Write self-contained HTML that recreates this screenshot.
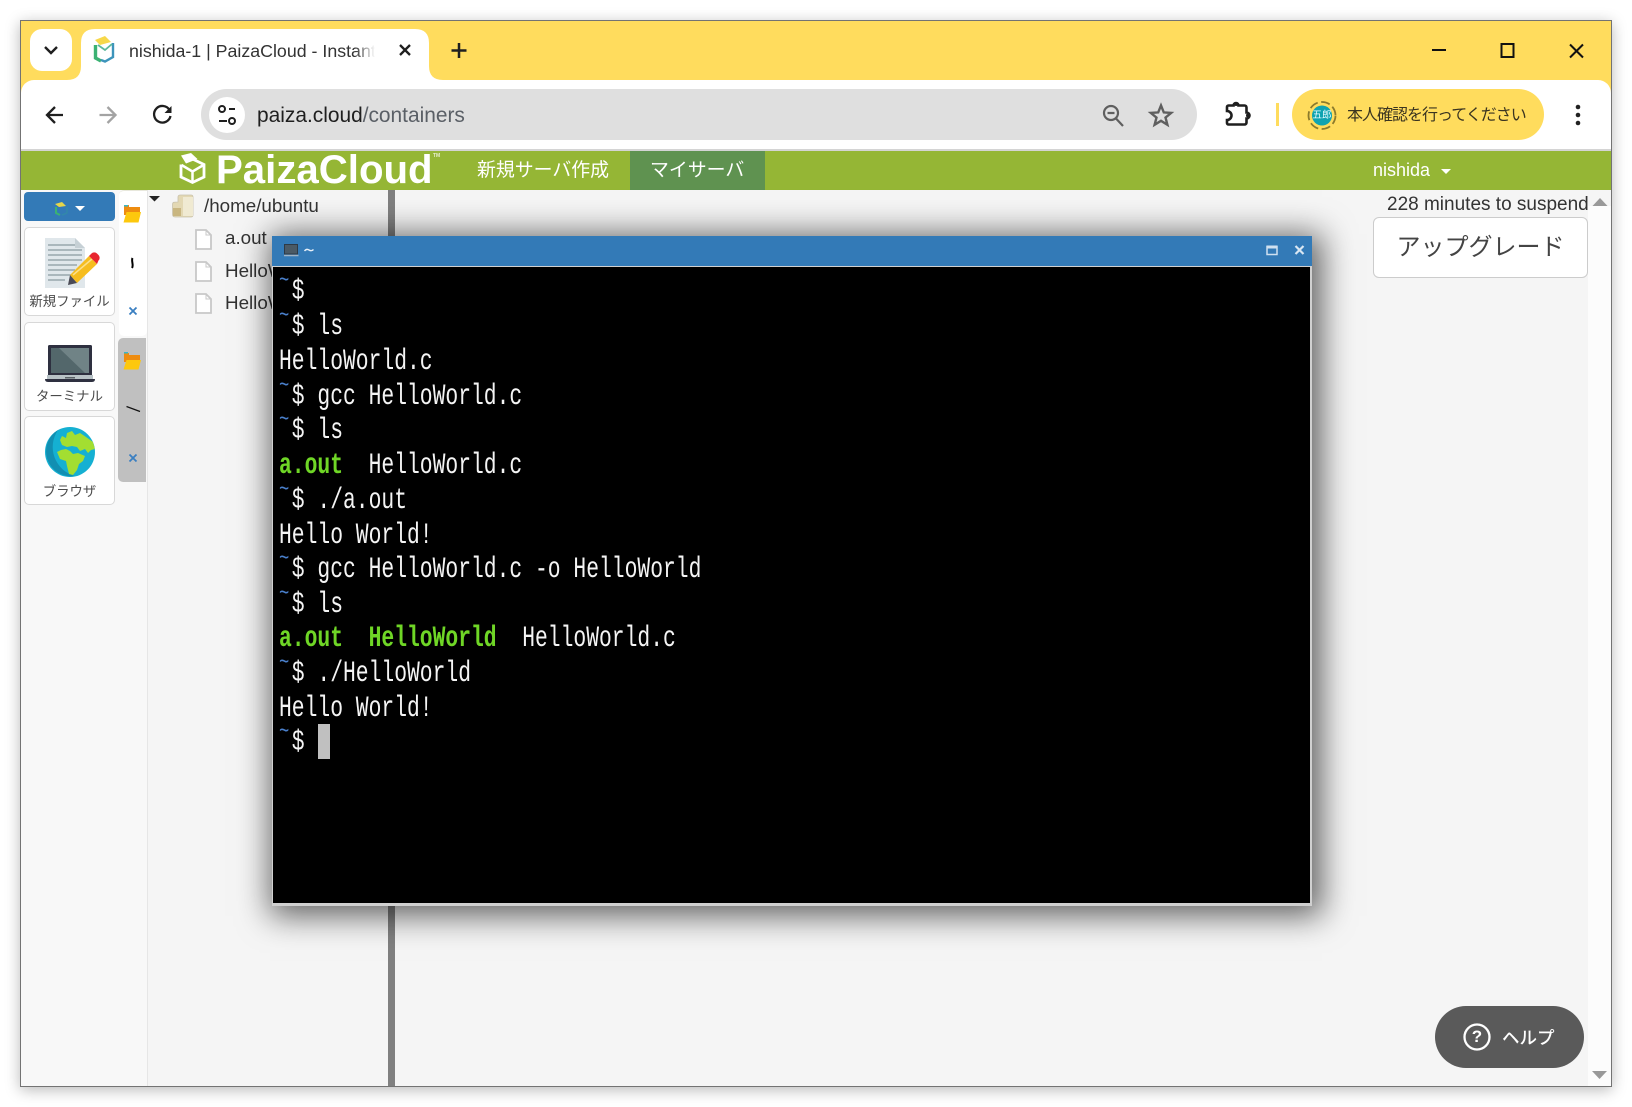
<!DOCTYPE html>
<html lang="ja">
<head>
<meta charset="utf-8">
<title>PaizaCloud</title>
<style>
html,body{margin:0;padding:0;background:#fff;width:1632px;height:1107px;overflow:hidden}
body{font-family:"Liberation Sans","Noto Sans CJK JP",sans-serif;color:#333;position:relative}
.a{position:absolute;white-space:nowrap}
svg{position:absolute;overflow:visible}
#win{left:20px;top:20px;width:1590px;height:1065px;border:1px solid #737373;background:#f5f5f5;box-shadow:0 3px 14px rgba(0,0,0,.28)}
.card{position:absolute;left:24px;width:89px;background:#fff;border:1px solid #d8d8d8;border-radius:5px}
.lbl{position:absolute;width:91px;left:24px;text-align:center;font-size:13.4px;line-height:18px;color:#4a4a4a;white-space:nowrap}
.file{position:absolute;left:225px;font-size:18.8px;line-height:24px;color:#333;white-space:nowrap}
.ln{position:absolute;left:279px;height:35px;line-height:35px;font-family:"Liberation Mono",monospace;font-size:30px;color:#f4f4f4;white-space:pre;transform:scaleX(.711);transform-origin:0 50%}
.ln i{font-style:normal;color:#4a80cc;position:relative;top:-12px;font-size:24px;letter-spacing:3.6px}
.ln b{color:#6fd626;font-weight:bold}
</style>
</head>
<body>
<div class="a" id="win"></div>

<!-- tab strip -->
<div class="a" style="left:21px;top:21px;width:1590px;height:75px;background:#ffdc5d"></div>
<div class="a" style="left:21px;top:80px;width:1590px;height:69px;background:#fff;border-radius:13px 13px 0 0"></div>
<div class="a" style="left:21px;top:149px;width:1590px;height:2px;background:#d4d4d4"></div>
<div class="a" style="left:30px;top:29px;width:42px;height:42px;background:#fff;border-radius:12px"></div>
<svg style="left:0;top:0" width="1632" height="160" fill="none">
  <path d="M45 47l6 6 6-6" stroke="#1f1f1f" stroke-width="2.4"/>
  <path d="M67 80Q81 80 81 66V43Q81 29 95 29H415Q429 29 429 43V66Q429 80 443 80Z" fill="#fff"/>
  <!-- favicon -->
  <path d="M95 40L105 36L111 42L100 45Z" fill="#f7d84a"/>
  <path d="M95.500 45V58L101 61" stroke="#3bb273" stroke-width="3.400"/>
  <path d="M113 43V57L105 61.500L101 60" stroke="#3d94bb" stroke-width="2.400"/>
  <path d="M98 45L105 50L112 44" stroke="#5cb89a" stroke-width="1.800"/>
  <!-- tab close, plus -->
  <path d="M400 45l10 10M410 45l-10 10" stroke="#1f1f1f" stroke-width="2.300"/>
  <path d="M459 43v15M451.500 50.500h15" stroke="#1f1f1f" stroke-width="2.500"/>
  <!-- window controls -->
  <path d="M1432 50h14" stroke="#111" stroke-width="2"/>
  <rect x="1501.500" y="44" width="12" height="13" stroke="#111" stroke-width="2"/>
  <path d="M1570 44.500l13 13M1583 44.500l-13 13" stroke="#111" stroke-width="2"/>
  <!-- nav -->
  <path d="M63 115H47M55 107l-8 8 8 8" stroke="#1f1f1f" stroke-width="2.300"/>
  <path d="M99.500 115h16M107.500 107l8 8-8 8" stroke="#a3a3a3" stroke-width="2.300"/>
  <path d="M169.500 110a8.300 8.300 0 1 0 1 6" stroke="#1f1f1f" stroke-width="2.300"/>
  <path d="M171.500 106v7h-7z" fill="#1f1f1f"/>
</svg>

<!-- omnibox -->
<div class="a" style="left:201px;top:89px;width:996px;height:51px;background:#dfdfdf;border-radius:26px"></div>
<div class="a" style="left:209px;top:97px;width:36px;height:36px;background:#fff;border-radius:50%"></div>
<svg style="left:0;top:0" width="1632" height="160" fill="none">
  <circle cx="222" cy="109" r="3" stroke="#1f1f1f" stroke-width="2"/>
  <path d="M229 109h6M219 121h8" stroke="#1f1f1f" stroke-width="2"/>
  <circle cx="232" cy="121" r="3" stroke="#1f1f1f" stroke-width="2"/>
  <circle cx="1111" cy="113" r="7" stroke="#5f5f5f" stroke-width="2.200"/>
  <path d="M1107.500 113h7M1116 118.500l7 7.500" stroke="#5f5f5f" stroke-width="2.200"/>
  <path d="M1161 105.500l2.800 6.900 7.400.5-5.700 4.700 1.900 7.200-6.400-4-6.400 4 1.900-7.200-5.700-4.700 7.400-.5z" stroke="#5f5f5f" stroke-width="2.400"/>
  <path d="M1228.500 105.500H1233.500a2.500 2.500 0 0 1 5 0H1244.500a2 2 0 0 1 2 2V112.500a3 3 0 0 1 0 6V122.500a2 2 0 0 1-2 2H1228.500a1.500 1.500 0 0 1-1.500-1.500V120a4.500 4.500 0 0 0 0-9V107a1.500 1.500 0 0 1 1.500-1.500Z" stroke="#1f1f1f" stroke-width="2.600"/>
  <circle cx="1236" cy="104" r="2" fill="#1f1f1f"/><circle cx="1248" cy="115.500" r="2" fill="#1f1f1f"/>
  <path d="M1277.500 103v23" stroke="#ffdc5d" stroke-width="3"/>
  <circle cx="1578" cy="107" r="2.300" fill="#222"/><circle cx="1578" cy="115" r="2.300" fill="#222"/><circle cx="1578" cy="123" r="2.300" fill="#222"/>
</svg>
<div class="a" style="left:1292px;top:89px;width:252px;height:51px;background:#ffdc5d;border-radius:26px"></div>
<svg style="left:0;top:0" width="1632" height="160" fill="none">
  <circle cx="1322" cy="115.500" r="13.500" stroke="#8b7a2c" stroke-width="1.800" stroke-dasharray="9 3.500"/>
  <circle cx="1322" cy="115.500" r="10" fill="#0fa3b1"/>
</svg>
<div class="a" style="left:1312px;top:108px;width:20px;text-align:center;font-size:9.500px;line-height:15px;color:#e8fbff">五郎</div>
<div class="a" style="left:1347px;top:104px;font-size:16px;line-height:24px;letter-spacing:-1px;color:#3a3420">本人確認を行ってください</div>

<div class="a" style="left:129px;top:38px;width:246px;overflow:hidden;font-size:17.800px;line-height:26px;color:#333">nishida-1 | PaizaCloud - Instant Development</div>
<div class="a" style="left:355px;top:38px;width:20px;height:26px;background:linear-gradient(90deg,rgba(255,255,255,0),#fff)"></div>
<div class="a" style="left:257px;top:102px;font-size:20.900px;line-height:28px;color:#1f1f1f">paiza.cloud<span style="color:#5a5f66">/containers</span></div>

<!-- green nav -->
<div class="a" style="left:21px;top:151px;width:1590px;height:39px;background:#95b635"></div>
<div class="a" style="left:630px;top:151px;width:135px;height:39px;background:#5f9250"></div>
<svg style="left:0;top:0" width="1632" height="200" fill="none">
  <path d="M192.500 159L204 164.500V177L192.500 182.500L181 177V164.500" stroke="#fff" stroke-width="2.800"/>
  <path d="M181 155.500L191 153L197.500 159L186 163.500Z" fill="#fff"/>
  <path d="M181.500 165L192.500 171.500L203.500 165M192.500 171.500V182" stroke="#fff" stroke-width="2.500"/>
</svg>
<div class="a" style="left:216px;top:147.500px;font-size:40.200px;line-height:44px;font-weight:bold;color:#fff;letter-spacing:0">PaizaCloud</div>
<div class="a" style="left:433px;top:152px;font-size:5px;line-height:8px;color:#e8eed0;font-weight:bold">TM</div>
<div class="a" style="left:477px;top:158px;font-size:18.900px;line-height:26px;color:#fff">新規サーバ作成</div>
<div class="a" style="left:650px;top:158px;font-size:18.900px;line-height:26px;color:#fff">マイサーバ</div>
<div class="a" style="left:1373px;top:157px;font-size:18px;line-height:26px;color:#fff">nishida</div>
<svg style="left:0;top:0" width="1632" height="200"><path d="M1441 169h10l-5 5z" fill="#fff"/></svg>

<!-- left column -->
<div class="a" style="left:21px;top:190px;width:126px;height:896px;background:#f8f8f8"></div>
<div class="a" style="left:147px;top:190px;width:1px;height:896px;background:#e6e6e6"></div>
<div class="a" style="left:24px;top:192px;width:91px;height:29px;background:#337ab7;border-radius:4px"></div>
<svg style="left:0;top:0" width="200" height="240" fill="none">
  <path d="M55 204L62 202L66 206L59 207Z" fill="#e6d64a"/>
  <path d="M56 207V213L60 215" stroke="#3bb273" stroke-width="2"/>
  <path d="M67 207V213L62 215" stroke="#3388aa" stroke-width="1.500"/>
  <path d="M75 206h10l-5 5z" fill="#fff"/>
</svg>
<div class="card" style="top:227px;height:87px"></div>
<div class="card" style="top:322px;height:87px"></div>
<div class="card" style="top:416px;height:87px"></div>
<div class="lbl" style="top:293px">新規ファイル</div>
<div class="lbl" style="top:388px">ターミナル</div>
<div class="lbl" style="top:483px">ブラウザ</div>

<svg style="left:0;top:0" width="140" height="520" fill="none">
  <defs><clipPath id="gl"><circle cx="70" cy="452" r="25"/></clipPath></defs>
  <!-- doc -->
  <path d="M45 238H75L85 248V288H45Z" fill="#e0e7eb"/>
  <path d="M75 238L85 248H75Z" fill="#c6d0d5"/>
  <path d="M48 245H75M48 250H82M48 255H82M48 260H82M48 265H77M48 270H75M48 275H72M48 280H65" stroke="#98a7ac" stroke-width="1.500"/>
  <path d="M70 275L89 256L97 264L77 283Z" fill="#f6bd1f"/>
  <path d="M73 275L92 259" stroke="#fbe08a" stroke-width="1.500"/>
  <path d="M89 256L91.500 253.500A3.800 3.800 0 0 1 97 253.500L98.500 255A3.800 3.800 0 0 1 98.500 260.500L97 264Z" fill="#e8262f"/>
  <path d="M70 275L77 283L68 285Z" fill="#4a4a55"/>
  <!-- laptop -->
  <rect x="48" y="345" width="44" height="31" rx="1.500" fill="#2e3040"/>
  <rect x="51" y="348" width="38" height="25" fill="#53676b"/>
  <path d="M59 348H89V373H85Z" fill="#708386"/>
  <path d="M47 375H93V380H47Z" fill="#b8c2c6"/>
  <path d="M45 379H95Q95 382 92 382H48Q45 382 45 379Z" fill="#2e3040"/>
  <rect x="65" y="377" width="10" height="1.500" fill="#5a6166"/>
  <!-- globe -->
  <circle cx="70" cy="452" r="25" fill="#15b0d2"/>
  <path d="M58 430A25 25 0 0 0 75 476A30 30 0 0 1 58 430Z" fill="#128fb2"/>
  <g clip-path="url(#gl)">
    <path d="M60 440L62 436L66 438L67 433L72 431L75 435L80 433L86 437L93 442L95 449L91 450L88 453L85 449L80 451L77 447L72 446L67 447L62 445Z" fill="#a3de31"/>
    <path d="M57 452L61 450L66 449L70 451L73 454L78 453L85 456L83 461L79 464L77 470L73 475L69 474L67 466L66 461L60 459Z" fill="#a3de31"/>
  </g>
</svg>

<!-- sidebar tabs -->
<div class="a" style="left:119px;top:190px;width:28px;height:146px;background:#fff;border-radius:5px 0 5px 5px;border-top:1px solid #e8e8dc;box-sizing:border-box"></div>
<div class="a" style="left:118px;top:338px;width:28px;height:144px;background:#c0c0c0;border-radius:5px 0 0 5px"></div>
<svg style="left:0;top:0" width="240" height="500" fill="none">
  <path d="M124 205H129V207H140V215H124Z" fill="#ee8c10"/>
  <path d="M124 205h4v1.500h-4z" fill="#36b6c9"/>
  <path d="M126.500 212H141L138.500 222.500H123.500Z" fill="#fdc80d"/>
  <path d="M124 353H129V355H140V362H124Z" fill="#ee8c10"/>
  <path d="M124 352h4v1.500h-4z" fill="#36b6c9"/>
  <path d="M126.500 360H141L138.500 369.500H123.500Z" fill="#fdc80d"/>
  <path d="M132.500 258C131 261 134 265 132 268" stroke="#000" stroke-width="2"/>
  <path d="M126.500 406.500L140 411.500" stroke="#111" stroke-width="1.300"/>
  <path d="M129.500 307.500l7 7M136.500 307.500l-7 7" stroke="#3a7fc1" stroke-width="1.800"/>
  <path d="M129.500 454.500l7 7M136.500 454.500l-7 7" stroke="#3a7fc1" stroke-width="1.800"/>
  <!-- tree -->
  <path d="M149 196h11l-5.500 5.500z" fill="#222"/>
  <path d="M172.500 214V204.500C172.500 202 174 202 178 202V197C178 195.500 179 195 180.500 195H191C192.500 195 193 196 193 197V215C193 216.500 192 217 191 217H175C173 217 172.500 216 172.500 214Z" fill="#e3d8b3" stroke="#c9c2ad" stroke-width=".8"/>
  <rect x="183" y="197" width="10" height="19" fill="#f0ead2"/>
  <path d="M173 208h8v8h-8z" fill="#c9b680"/>
  <path d="M196 230H206L211 235V249H196Z" fill="#fff" stroke="#c8c8c8" stroke-width="1.800"/>
  <path d="M206 230V235H211" stroke="#c8c8c8" stroke-width="1"/>
  <path d="M196 262H206L211 267V281H196Z" fill="#fff" stroke="#c8c8c8" stroke-width="1.800"/>
  <path d="M206 262V267H211" stroke="#c8c8c8" stroke-width="1"/>
  <path d="M196 294H206L211 299V313H196Z" fill="#fff" stroke="#c8c8c8" stroke-width="1.800"/>
  <path d="M206 294V299H211" stroke="#c8c8c8" stroke-width="1"/>
</svg>
<div class="file" style="left:204px;top:194px">/home/ubuntu</div>
<div class="file" style="top:226px">a.out</div>
<div class="file" style="top:259px">HelloWorld</div>
<div class="file" style="top:291px">HelloWorld.c</div>

<!-- splitter -->
<div class="a" style="left:388px;top:190px;width:7px;height:896px;background:#808080"></div>

<!-- right -->
<div class="a" style="left:1588px;top:206px;width:23px;height:880px;background:#fcfcfc"></div>
<div class="a" style="left:1387px;top:192px;font-size:19px;line-height:25px;color:#333">228 minutes to suspend</div>
<div class="a" style="left:1373px;top:217px;width:213px;height:59px;background:#fff;border:1px solid #ccc;border-radius:6px;text-align:center;font-size:24px;line-height:59px;color:#444">アップグレード</div>
<svg style="left:0;top:0" width="1632" height="1107">
  <path d="M1592.500 206h15l-7.500-8z" fill="#999"/>
  <path d="M1592 1071h15l-7.500 8z" fill="#999"/>
</svg>
<div class="a" style="left:1435px;top:1006px;width:149px;height:62px;background:#5a5a5a;border-radius:31px"></div>
<svg style="left:0;top:0" width="1632" height="1107" fill="none">
  <circle cx="1477" cy="1037" r="12.500" stroke="#fff" stroke-width="2.300"/>
</svg>
<div class="a" style="left:1467px;top:1024px;width:20px;text-align:center;font-size:17px;line-height:26px;font-weight:bold;color:#fff">?</div>
<div class="a" style="left:1502px;top:1025px;font-size:17.500px;line-height:26px;color:#fff;font-weight:500">ヘルプ</div>

<!-- terminal -->
<div class="a" style="left:272px;top:236px;width:1040px;height:670px;background:#d0d0d0;box-shadow:4px 4px 30px 6px rgba(0,0,0,.6)"></div>
<div class="a" style="left:272px;top:236px;width:1040px;height:30px;background:#337ab7"></div>
<div class="a" style="left:273px;top:267px;width:1037px;height:636px;background:#000"></div>
<svg style="left:0;top:0" width="1632" height="300" fill="none">
  <rect x="284.500" y="244.500" width="13" height="9.500" fill="#4a5a66" stroke="#2e3a46"/>
  <path d="M284 255.500h14.500" stroke="#9fb4c6" stroke-width="1.500"/>
  <path d="M304.500 251c1.500-2 3-2 4.500-1s3 1 4.500-.5" stroke="#e8f0f8" stroke-width="1.400"/>
  <rect x="1267" y="246.500" width="10" height="8" stroke="#cfe0f0" stroke-width="1.500"/>
  <path d="M1266.500 247h11" stroke="#cfe0f0" stroke-width="3"/>
  <path d="M1295.500 246l8 8M1303.500 246l-8 8" stroke="#d8e6f2" stroke-width="2.200"/>
</svg>
<div class="ln" style="top:274.500px"><i>~</i>$</div>
<div class="ln" style="top:310px"><i>~</i>$ ls</div>
<div class="ln" style="top:345px">HelloWorld.c</div>
<div class="ln" style="top:379.500px"><i>~</i>$ gcc HelloWorld.c</div>
<div class="ln" style="top:414px"><i>~</i>$ ls</div>
<div class="ln" style="top:449px"><b>a.out</b>  HelloWorld.c</div>
<div class="ln" style="top:484px"><i>~</i>$ ./a.out</div>
<div class="ln" style="top:518.500px">Hello World!</div>
<div class="ln" style="top:552.700px"><i>~</i>$ gcc HelloWorld.c -o HelloWorld</div>
<div class="ln" style="top:588px"><i>~</i>$ ls</div>
<div class="ln" style="top:622.200px"><b>a.out</b>  <b>HelloWorld</b>  HelloWorld.c</div>
<div class="ln" style="top:657px"><i>~</i>$ ./HelloWorld</div>
<div class="ln" style="top:691.700px">Hello World!</div>
<div class="ln" style="top:726px"><i>~</i>$</div>
<div class="a" style="left:318px;top:724px;width:12px;height:35px;background:#c0c0c0"></div>
</body>
</html>
